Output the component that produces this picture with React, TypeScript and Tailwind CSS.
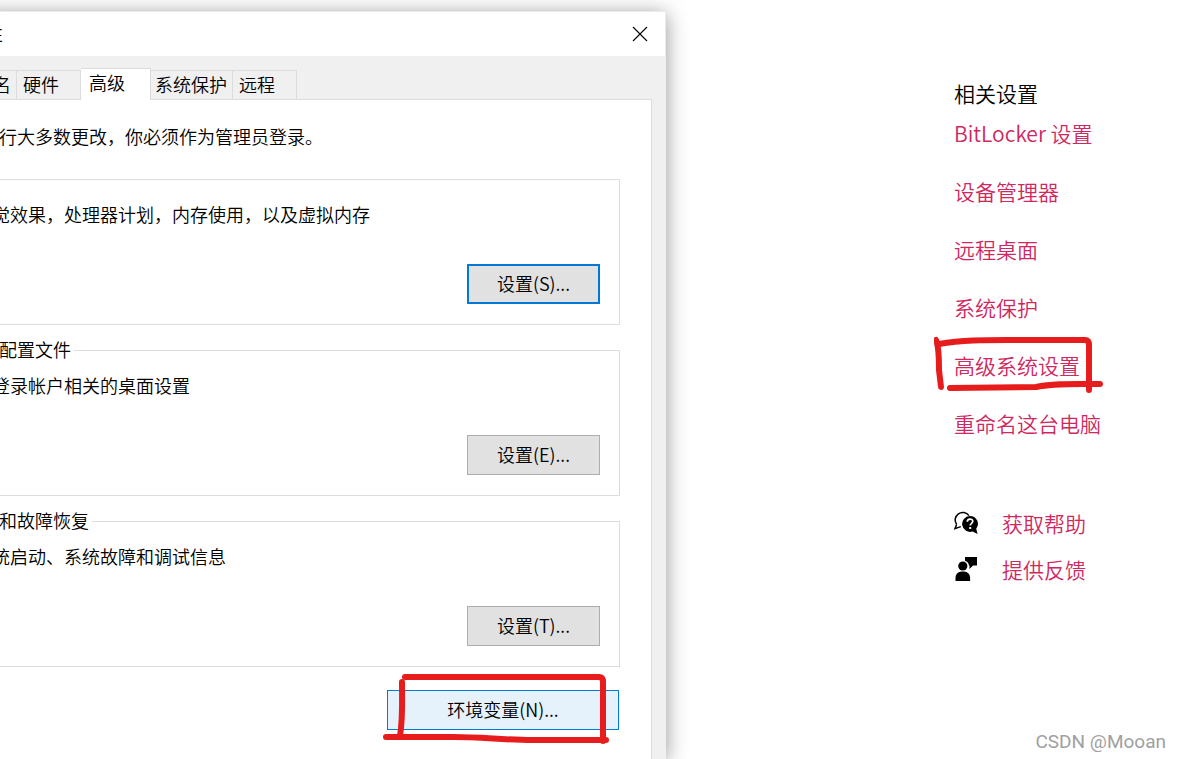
import { clsx } from 'clsx';
import { useState } from 'react';

const TABS = [
  { label: '名', width: 'w-[33px] pl-[9px]' },
  { label: '硬件', width: 'w-[64px] pl-[6px]' },
  { label: '高级', width: 'w-[70px] pl-[8px]' },
  { label: '系统保护', width: 'w-[82px] pl-[4px]' },
  { label: '远程', width: 'w-[64px] pl-[6px]' },
];

const GROUPS = [
  {
    legend: '',
    text: '觉效果，处理器计划，内存使用，以及虚拟内存',
    button: '设置(S)...',
    focused: true,
  },
  {
    legend: '配置文件',
    text: '登录帐户相关的桌面设置',
    button: '设置(E)...',
  },
  {
    legend: '和故障恢复',
    text: '统启动、系统故障和调试信息',
    button: '设置(T)...',
  },
];

const LINKS = [
  'BitLocker 设置',
  '设备管理器',
  '远程桌面',
  '系统保护',
  '高级系统设置',
  '重命名这台电脑',
];

interface SettingsGroupProps {
  legend: string;
  text: string;
  button: string;
  focused?: boolean;
}

const SettingsGroup = ({
  legend,
  text,
  button,
  focused = false,
}: SettingsGroupProps) => (
  <fieldset
    className={clsx(
      'border border-l-0 border-[#dcdcdc] pr-[19px] pb-[20px]',
      !legend && 'mt-[11px]',
    )}
  >
    {legend && (
      <legend className="h-[23px] pr-[3px] pl-[15px] leading-[21px]">
        {legend}
      </legend>
    )}
    <p
      className={clsx(
        'h-6 pl-2 leading-[22px] whitespace-nowrap',
        legend ? 'mt-[12px]' : 'mt-[23px]',
      )}
    >
      {text}
    </p>
    <div className="mt-[37px] flex justify-end">
      <button
        type="button"
        className={clsx(
          'h-10 w-[133px] bg-[#e1e1e1] pb-[2px]',
          focused ? 'border-2 border-[#0078d7]' : 'border border-[#adadad]',
        )}
      >
        {button}
      </button>
    </div>
  </fieldset>
);

const HelpIcon = () => (
  <svg viewBox="0 0 24 24" className="h-6 w-6" aria-hidden="true">
    <path
      d="M2.6 13.4A7.2 7.2 0 1 1 15 4.6M2.6 13.4L1 17.6l5.8-2"
      fill="none"
      stroke="black"
      strokeWidth="1.5"
    />
    <path
      d="M15.8 4.9a8 8 0 1 0 2.8 15.6L23.6 23l-1.4-5.2A8 8 0 0 0 15.8 4.9z"
      fill="black"
    />
    <path
      d="M13.3 10.8c0-3.7 5.5-3.5 5.5-.5 0 2-2.6 2-2.6 4.3"
      fill="none"
      stroke="white"
      strokeWidth="1.7"
    />
    <rect x="15.2" y="16" width="2" height="2" fill="white" />
  </svg>
);

const FeedbackIcon = () => (
  <svg viewBox="0 0 24 24" className="h-6 w-6" aria-hidden="true">
    <path d="M11 0h12v8.5h-4L15.5 12V8.5H15A6 6 0 0 0 11 3.8z" />
    <circle cx="8.8" cy="9" r="4.6" />
    <path d="M1.5 24v-3.5a6 6 0 0 1 6-6h2.6a6 6 0 0 1 6 6V24z" />
  </svg>
);

const LinkMark = () => (
  <svg
    viewBox="0 0 170 60"
    className="pointer-events-none absolute -top-[15px] -left-5 h-[60px] w-[170px] max-w-none"
    fill="none"
    stroke="#e71c1c"
    strokeWidth="6"
    strokeLinecap="round"
    strokeLinejoin="round"
    aria-hidden="true"
  >
    <path d="M2 4C5 10 5 22 5 34L7 51" />
    <path d="M5 8C28 4 50 4 74 4L151 4Q155 4 155 9L155 54" />
    <path d="M16 52L102 51C120 47 140 48 166 48" />
  </svg>
);

const ButtonMark = () => (
  <svg
    viewBox="0 0 230 72"
    className="pointer-events-none absolute -top-4 -left-1 h-[72px] w-[230px] max-w-none"
    fill="none"
    stroke="#e71c1c"
    strokeWidth="6"
    strokeLinecap="round"
    strokeLinejoin="round"
    aria-hidden="true"
  >
    <path d="M22 3H216Q220 3 220 8L220 67" />
    <path d="M19 8C19 28 20 44 17 62" />
    <path d="M3 63L70 63C100 63 120 66 150 66L223 66" />
  </svg>
);

const SystemProperties = () => {
  const [active, setActive] = useState('高级');

  return (
    <section className="relative -ml-4 mt-[11px] flex min-w-0 flex-1 flex-col bg-[#f0f0f0] text-lg text-black shadow-[0_3px_20px_rgba(0,0,0,0.42)]">
      <header className="flex h-[45px] items-center justify-between border-t border-r border-[#ececec] bg-white pr-4 pb-px pl-px">
        <h1 className="pb-[2px]">性</h1>
        <button type="button" aria-label="关闭">
          <svg
            viewBox="0 0 18 18"
            className="h-[18px] w-[18px]"
            stroke="black"
            strokeWidth="1.1"
            aria-hidden="true"
          >
            <path d="M2 2l14 14M16 2l-14 14" />
          </svg>
        </button>
      </header>

      <div className="flex flex-1 flex-col pt-3 pr-[14px]">
        <div role="tablist" className="flex h-[31px] items-end">
          {TABS.map(({ label, width }) => (
            <button
              key={label}
              type="button"
              role="tab"
              aria-selected={label === active}
              onClick={() => setActive(label)}
              className={clsx(
                'border-t border-[#dcdcdc] text-left leading-6 whitespace-nowrap',
                width,
                label === active
                  ? 'relative z-10 -mb-px h-8 border-r bg-white pb-[5px]'
                  : 'h-[29px] border-r bg-[#f0f0f0] pb-[2px]',
              )}
            >
              {label}
            </button>
          ))}
        </div>

        <div
          role="tabpanel"
          className="flex-1 border-t border-r border-[#dcdcdc] bg-white pr-[31px]"
        >
          <p className="mt-[25px] mb-[19px] h-6 pl-[15px] leading-[22px] whitespace-nowrap">
            行大多数更改，你必须作为管理员登录。
          </p>
          <div className="flex flex-col gap-[14px]">
            {GROUPS.map((group) => (
              <SettingsGroup key={group.button} {...group} />
            ))}
          </div>
          <div className="mt-[23px] flex justify-end pr-px">
            <div className="relative">
              <button
                type="button"
                className="h-10 w-[232px] border border-[#0078d7] bg-[#e5f1fb] pb-[2px]"
              >
                环境变量(N)...
              </button>
              <ButtonMark />
            </div>
          </div>
        </div>
      </div>
    </section>
  );
};

const RelatedSettings = () => (
  <aside className="flex w-[514px] shrink-0 flex-col pt-[79px] pr-[14px] text-[21px] leading-7 text-[#cf2860]">
    <div className="pl-[288px]">
      <h2 className="text-black">相关设置</h2>
      <ul className="mt-3 flex flex-col gap-[30px]">
        {LINKS.map((link) => (
          <li key={link} className="relative">
            <a href="#settings">{link}</a>
            {link === '高级系统设置' && <LinkMark />}
          </li>
        ))}
      </ul>
      <ul className="mt-[72px] flex flex-col gap-[18px]">
        <li className="flex items-start gap-6">
          <span className="pt-[2px] text-black">
            <HelpIcon />
          </span>
          <a href="#help">获取帮助</a>
        </li>
        <li className="flex items-start gap-6">
          <span className="pt-[2px] text-black">
            <FeedbackIcon />
          </span>
          <a href="#feedback">提供反馈</a>
        </li>
      </ul>
    </div>
    <p className="mt-auto pb-[3px] text-right font-['Roboto',sans-serif] text-[19px] font-normal text-[#a0a0a0]">
      CSDN @Mooan
    </p>
  </aside>
);

const App = () => (
  <main className="flex min-h-screen overflow-hidden bg-white font-['Noto_Sans_CJK_SC',sans-serif] font-[350]">
    <SystemProperties />
    <RelatedSettings />
  </main>
);

export default App;
